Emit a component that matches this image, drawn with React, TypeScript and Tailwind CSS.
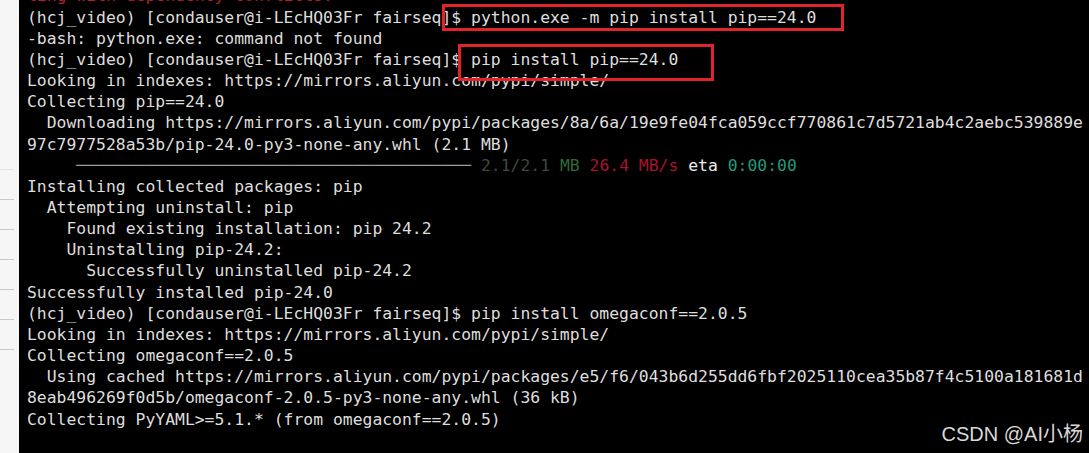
import React from 'react';

const prompt = '(hcj_video) [condauser@i-LEcHQ03Fr fairseq]$ ';

const lines: string[] = [
  prompt + 'python.exe -m pip install pip==24.0',
  '-bash: python.exe: command not found',
  prompt + 'pip install pip==24.0',
  'Looking in indexes: https://mirrors.aliyun.com/pypi/simple/',
  'Collecting pip==24.0',
  '  Downloading https://mirrors.aliyun.com/pypi/packages/8a/6a/19e9fe04fca059ccf770861c7d5721ab4c2aebc539889e',
  '97c7977528a53b/pip-24.0-py3-none-any.whl (2.1 MB)',
  '__progress__',
  'Installing collected packages: pip',
  '  Attempting uninstall: pip',
  '    Found existing installation: pip 24.2',
  '    Uninstalling pip-24.2:',
  '      Successfully uninstalled pip-24.2',
  'Successfully installed pip-24.0',
  prompt + 'pip install omegaconf==2.0.5',
  'Looking in indexes: https://mirrors.aliyun.com/pypi/simple/',
  'Collecting omegaconf==2.0.5',
  '  Using cached https://mirrors.aliyun.com/pypi/packages/e5/f6/043b6d255dd6fbf2025110cea35b87f4c5100a181681d',
  '8eab496269f0d5b/omegaconf-2.0.5-py3-none-any.whl (36 kB)',
  'Collecting PyYAML>=5.1.* (from omegaconf==2.0.5)',
];

const ProgressLine = () => (
  <div className="whitespace-pre">
    {'     '}
    <span className="text-[#9c9c9c]">{'─'.repeat(40)}</span>
    {' '}
    <span className="text-[#3f4a3f]">2.1/2.1</span>{' '}
    <span className="text-[#2f6a32]">MB</span>{' '}
    <span className="text-[#a8132e]">26.4 MB/s</span>{' '}
    <span className="text-[#ececec]">eta</span>{' '}
    <span className="text-[#1f9a7e]">0:00:00</span>
  </div>
);

// the side panel peeking out on the left of the terminal window
const SideStrip = () => (
  <div className="w-[19px] shrink-0 bg-[#f6f6f6] flex flex-col">
    <div className="h-[169px]" />
    <div className="h-px w-[14px] bg-[#e4e4e4]" />
    {[0, 1, 2, 3, 4, 5].map(i => (
      <div key={i} className="flex flex-col">
        <div className="h-[29px]" />
        <div className="h-px w-[14px] bg-[#c9c9c9]" />
      </div>
    ))}
  </div>
);

export default function App() {
  return (
    <div className="relative flex h-[453px] w-[1089px] overflow-hidden bg-black">
      <SideStrip />
      <div className="flex-1 bg-black pl-[8px] overflow-hidden">
        <div
          className="mt-[-14.6px] text-[16.4px] leading-[21.16px] text-[#dedede]"
          style={{ fontFamily: '"DejaVu Sans Mono", "Liberation Mono", monospace' }}
        >
          <div className="whitespace-pre text-[#b3202a]">ling with dependency conflicts.</div>
          {lines.map((l, i) =>
            l === '__progress__' ? (
              <ProgressLine key={i} />
            ) : (
              <div key={i} className="whitespace-pre">
                {l}
              </div>
            )
          )}
        </div>
      </div>

      {/* red highlight boxes */}
      <div className="absolute left-[442px] top-[4px] h-[27px] w-[402px] border-[3px] border-[#e3232b]" />
      <div className="absolute left-[458px] top-[44px] h-[37px] w-[256px] border-[3px] border-[#e3232b]" />

      {/* watermark */}
      <div
        className="absolute right-[6px] top-[424px] text-[20px] leading-none text-[#d8d8d8]"
        style={{ fontFamily: '"Liberation Sans", "Noto Sans CJK SC", sans-serif' }}
      >
        CSDN @AI小杨
      </div>
    </div>
  );
}
